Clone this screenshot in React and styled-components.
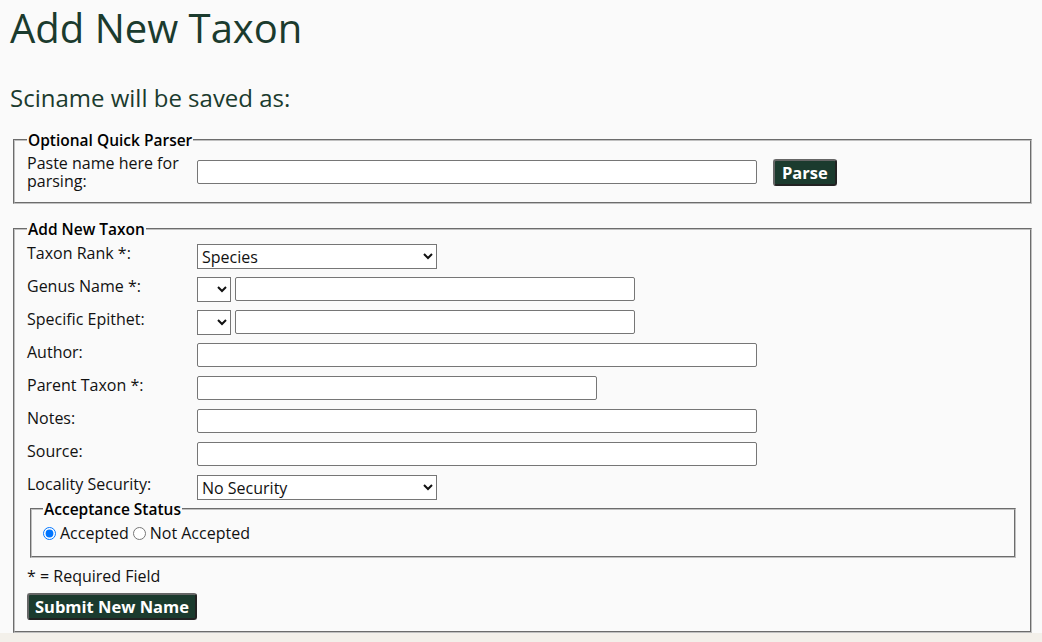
import styled, { createGlobalStyle } from 'styled-components';

const GlobalStyle = createGlobalStyle`
  body {
    margin: 0;
    background: #f3f0ea;
    font-family: 'Open Sans', 'Noto Sans', sans-serif;
    color: #111;
  }
`;

function App() {
  return (
    <>
      <GlobalStyle />
      <Page>
        <Title>Add New Taxon</Title>
        <Subtitle>Sciname will be saved as:</Subtitle>
        <Fieldset $mt={17}>
          <Legend>Optional Quick Parser</Legend>
          <ParserRow>
            <Label>Paste name here for parsing:</Label>
            <TextInput $width={560} />
            <Button $ml={16} $px={7}>Parse</Button>
          </ParserRow>
        </Fieldset>
        <Fieldset $mt={16}>
          <Legend>Add New Taxon</Legend>
          <Rows>
            <Row>
              <Label>Taxon Rank *:</Label>
              <Select $width={240} defaultValue='species'>
                <option value='species'>Species</option>
              </Select>
            </Row>
            <Row>
              <Label>Genus Name *:</Label>
              <Select $width={34}>
                <option></option>
              </Select>
              <TextInput $width={400} $ml={4} />
            </Row>
            <Row>
              <Label>Specific Epithet:</Label>
              <Select $width={34}>
                <option></option>
              </Select>
              <TextInput $width={400} $ml={4} />
            </Row>
            <Row>
              <Label>Author:</Label>
              <TextInput $width={560} />
            </Row>
            <Row>
              <Label>Parent Taxon *:</Label>
              <TextInput $width={400} />
            </Row>
            <Row>
              <Label>Notes:</Label>
              <TextInput $width={560} />
            </Row>
            <Row>
              <Label>Source:</Label>
              <TextInput $width={560} />
            </Row>
            <Row>
              <Label>Locality Security:</Label>
              <Select $width={240} defaultValue='none'>
                <option value='none'>No Security</option>
              </Select>
            </Row>
          </Rows>
          <InnerFieldset>
            <Legend>Acceptance Status</Legend>
            <RadioGroup>
              <RadioLabel>
                <input type='radio' name='status' defaultChecked />
                Accepted
              </RadioLabel>
              <RadioLabel>
                <input type='radio' name='status' />
                Not Accepted
              </RadioLabel>
            </RadioGroup>
          </InnerFieldset>
          <Note>* = Required Field</Note>
          <Button $mt={6}>Submit New Name</Button>
        </Fieldset>
      </Page>
    </>
  );
}

const Page = styled.div`
  background: #fafafa;
  padding: 0 10px;
  overflow: hidden;
`;

const Title = styled.h1`
  margin: 1px 0 0;
  font-size: 40px;
  font-weight: 500;
  line-height: 54px;
  color: #1b3b2e;
`;

const Subtitle = styled.h2`
  margin: 27px 0 0;
  font-size: 24px;
  font-weight: 500;
  line-height: 32px;
  color: #1b3b2e;
`;

const Fieldset = styled.fieldset`
  margin: ${p => p.$mt}px 0 0 3px;
  padding: 0 12px 11px 12px;
  border: 2px groove #c0c0c0;
  font-size: 16px;
`;

const InnerFieldset = styled.fieldset`
  margin: 0 2px 0 3px;
  padding: 4px 12px 12px 11px;
  border: 2px groove #c0c0c0;
`;

const Legend = styled.legend`
  padding: 0 1px;
  font-weight: 600;
  font-size: 15.5px;
  line-height: 18px;
  color: #000;
`;

const ParserRow = styled.div`
  display: flex;
  align-items: center;
  padding: 5px 0 1px;
`;

const Rows = styled.div`
  display: flex;
  flex-direction: column;
  gap: 8px;
  padding-top: 6px;
`;

const Row = styled.div`
  display: flex;
  align-items: flex-start;
  height: 25px;
`;

const Label = styled.label`
  width: 170px;
  flex-shrink: 0;
  line-height: 18px;
`;

const TextInput = styled.input`
  box-sizing: border-box;
  width: ${p => p.$width}px;
  height: 24px;
  margin: 0 0 0 ${p => p.$ml || 0}px;
  border: 1px solid #767676;
  border-radius: 2px;
  background: #fff;
  font: inherit;
`;

const Select = styled.select`
  box-sizing: border-box;
  width: ${p => p.$width}px;
  height: 25px;
  margin: 0;
  padding: 0;
  border: 1px solid #767676;
  border-radius: 0;
  background: #fff;
  font-family: inherit;
  font-size: 16px;
  color: #111;
`;

const RadioGroup = styled.div`
  display: flex;
  align-items: center;
  line-height: 22px;
`;

const RadioLabel = styled.label`
  display: inline-flex;
  align-items: center;
  margin-right: 4px;

  input {
    margin: 0 4px 0 0;
    width: 13px;
    height: 13px;
  }
`;

const Note = styled.div`
  margin-top: 7px;
  line-height: 22px;
`;

const Button = styled.button`
  display: block;
  margin: ${p => p.$mt || 0}px 0 0 ${p => p.$ml || 0}px;
  padding: 2px ${p => p.$px || 6}px;
  background: #1b3b2e;
  color: #fff;
  border: 2px solid #555;
  border-color: #666 #222 #222 #666;
  border-radius: 3px;
  font-family: inherit;
  font-size: 16.5px;
  font-weight: 700;
  line-height: 19px;
  cursor: pointer;
`;

export default App;
